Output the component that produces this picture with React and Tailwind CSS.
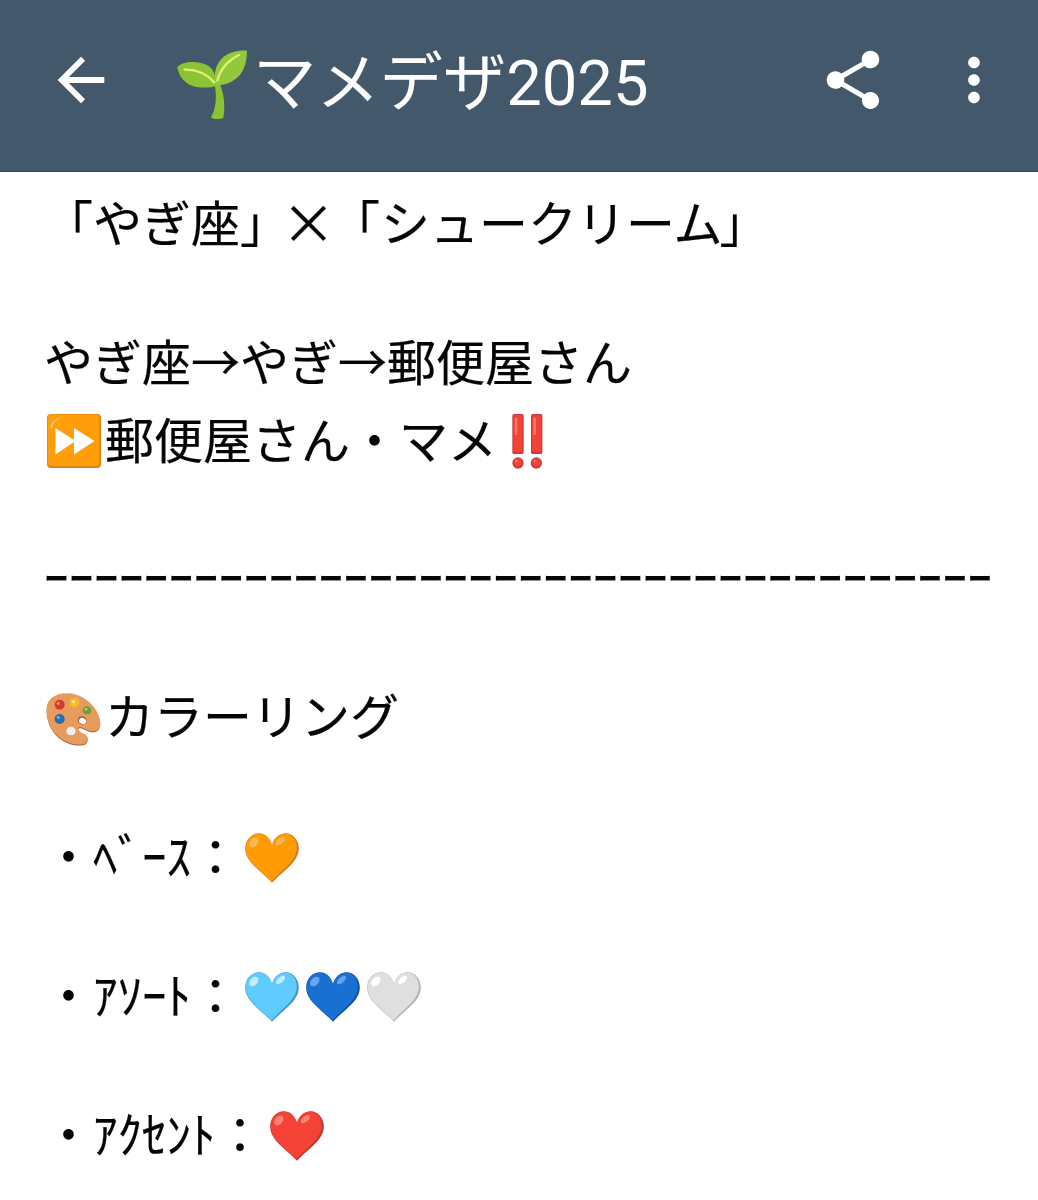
import React from "react";
import { MdArrowBack, MdMoreVert, MdShare } from "react-icons/md";

const Heart = ({ fill, edge, shine, className = "" }) => (
  <span className={`inline-flex w-[61px] h-[60px] shrink-0 items-center ${className}`}>
    <svg viewBox="0 0 54 50" className="ml-[4px] mt-[8px] w-[54px] h-[50px]">
      <path
        d="M27 12.5C25.5 5.500 20.500.3 14 .3 6 .3.2 7 .2 15.500.2 29 15 37 27 49.800 39 37 53.800 29 53.800 15.500 53.800 7 48 .3 40.500.3 34 .3 28.500 5.500 27 12.500Z"
        fill={edge}
      />
      <path
        d="M27 12.5C25.500 5.500 20.500.8 14 .8 6.300.8.7 7 .7 15.300.7 28.500 15 36.500 26.500 48.500 38 35.500 51.800 28 51.800 14.500 51.800 6.500 46.500.8 40.500.8 34 .8 28.500 5.500 27 12.500Z"
        fill={fill}
      />
      <ellipse cx="8.800" cy="9.500" rx="3.700" ry="5.600" transform="rotate(42 8.800 9.500)" fill={shine} />
      <ellipse cx="35.500" cy="8" rx="2.800" ry="5.600" transform="rotate(48 35.500 8)" fill={shine} />
    </svg>
  </span>
);

const Seedling = () => (
  <svg viewBox="440 60 210 207" className="w-[70px] h-[69px]">
    <path
      d="M552 155C557 185 562 225 543 261C541 268 575 269 579 263C584 235 583 195 569 163Z"
      fill="#8bc334"
    />
    <path
      d="M441 112C452 96 484 93 509 98C538 104 552 118 555 145L559 167C538 175 500 175 477 164C457 153 445 134 441 112Z"
      fill="#8bc334"
    />
    <path
      d="M555 160C549 133 556 99 582 79C603 64 627 61 650 62C650 91 643 121 623 141C604 159 580 166 558 166Z"
      fill="#94c83c"
    />
    <path
      d="M463 119C494 118 525 128 552 157M561 151C570 120 593 91 626 75"
      fill="none"
      stroke="#e3ee72"
      strokeWidth="7"
      strokeLinecap="round"
    />
  </svg>
);

const FastForward = () => (
  <span className="inline-flex w-[61px] shrink-0 items-center">
    <svg viewBox="0 0 54 54" className="ml-[3px] mt-[6px] w-[54px] h-[54px]">
      <rect width="54" height="54" rx="4" fill="#db850f" />
      <rect x=".8" y=".5" width="51.500" height="51.500" rx="3.500" fill="#ff9d0a" />
      <path d="M3.500 14C3.500 8 8 4.500 15 3.500C9 6 6 9 5 14Z" fill="#ffc56a" />
      <path d="M8.500 14 27 26V14L47.500 27 27 40.500V28L8.500 40.500Z" fill="#fff" />
    </svg>
  </span>
);

const DoubleBang = () => (
  <span className="inline-flex w-[61px] shrink-0 items-center justify-center">
    <svg viewBox="98 41 91 165" className="mt-[6px] w-[31px] h-[55px]">
      <g fill="#c83a3a">
        <rect x="98" y="41" width="34" height="120" rx="5" />
        <rect x="154" y="41" width="34" height="120" rx="5" />
        <circle cx="115" cy="188" r="17" />
        <circle cx="170" cy="188" r="17" />
      </g>
      <g fill="#f44336">
        <rect x="101" y="44" width="27" height="112" rx="3" />
        <rect x="157" y="44" width="27" height="112" rx="3" />
        <circle cx="115" cy="186" r="13" />
        <circle cx="170" cy="186" r="13" />
      </g>
      <g fill="#ff7769">
        <rect x="105" y="52" width="8" height="52" rx="3" />
        <rect x="161" y="52" width="8" height="52" rx="3" />
        <circle cx="110" cy="182" r="4" />
        <circle cx="165" cy="182" r="4" />
      </g>
    </svg>
  </span>
);

const palettePath =
  "M52 86C52 56 82 37 119 40C164 44 205 80 212 121C216 146 202 158 182 153C169 150 158 139 150 142C140 149 155 157 168 163C179 170 177 188 164 192C139 198 104 188 82 165C61 144 51 114 52 86Z";

const Palette = () => (
  <span className="inline-flex w-[61px] shrink-0 items-center">
    <svg viewBox="50 36 165 162" className="ml-[2px] mt-[9px] w-[55px] h-[54px]">
      <path d={palettePath} fill="#9c6540" transform="translate(0 3)" />
      <path d={palettePath} fill="#e79b5c" />
      <circle cx="91" cy="74" r="15" fill="#cf3b2d" />
      <circle cx="87" cy="70" r="5" fill="#f3887d" />
      <ellipse cx="135" cy="68" rx="15" ry="13" fill="#f7bf25" />
      <circle cx="132" cy="65" r="5" fill="#ffe685" />
      <ellipse cx="173" cy="91" rx="13" ry="12" fill="#6d9e38" />
      <circle cx="170" cy="88" r="4" fill="#b3d579" />
      <circle cx="91" cy="117" r="15" fill="#286ca8" />
      <circle cx="87" cy="112" r="5" fill="#70acdb" />
      <ellipse cx="125" cy="153" rx="14" ry="13" fill="#f1eeee" />
      <ellipse cx="159" cy="121" rx="14" ry="12" fill="#9c6540" transform="rotate(30 159 121)" />
      <ellipse cx="160" cy="123" rx="11" ry="9" fill="#fff" transform="rotate(30 160 123)" />
    </svg>
  </span>
);

const Line = ({ className = "", children }) => (
  <p className={`flex h-[60px] items-center whitespace-pre ${className}`}>{children}</p>
);

const App = () => {
  return (
    <div
      lang="ja"
      className="h-[1200px] w-[1038px] overflow-hidden bg-white text-[#050505] font-['Noto_Sans_CJK_JP',sans-serif]"
    >
      <header className="flex h-[172px] items-start border-b border-[#34424f] bg-[#43586b] pl-[46px] pt-[45px] text-white">
        <button type="button" aria-label="戻る">
          <MdArrowBack className="size-[70px]" />
        </button>
        <h1 className="ml-[61px] mt-[4px] flex h-[70px] items-center text-[63.300px] font-normal leading-[70px] font-['Roboto','Noto_Sans_CJK_JP',sans-serif]">
          <Seedling />
          <span className="-mt-[3px] ml-[6px]">マメデザ2025</span>
        </h1>
        <div className="ml-auto flex gap-[51px] pr-[29px]">
          <button type="button" aria-label="共有">
            <MdShare className="size-[70px]" />
          </button>
          <button type="button" aria-label="メニュー">
            <MdMoreVert className="size-[70px]" />
          </button>
        </div>
      </header>

      <main className="flex flex-col pl-[44px] pt-[19px] text-[49px] leading-[60px] [-webkit-text-stroke:0.200px_#050505]">
        <Line>
          「やぎ座
          <span className="[font-feature-settings:'halt']">」</span>
          <span className="ml-[17px] mr-[20px] text-[54px]">×</span>
          <span className="mr-px [font-feature-settings:'halt']">「</span>
          シュークリーム
          <span className="-ml-[3px]">」</span>
        </Line>
        <Line className="mt-[79px]">やぎ座→やぎ→郵便屋さん</Line>
        <Line className="mt-[18px]">
          <FastForward />
          郵便屋さん・マメ
          <DoubleBang />
        </Line>
        <Line className="mt-[77px] tracking-[0.460px]">{"ｰ".repeat(38)}</Line>
        <Line className="mt-[79px]">
          <Palette />
          カラーリング
        </Line>
        <Line className="mt-[80px]">
          ・ﾍﾞｰｽ：
          <Heart className="ml-px" fill="#ff9b05" edge="#d47d20" shine="#ffb957" />
        </Line>
        <Line className="mt-[79px]">
          ・ｱｿｰﾄ：
          <Heart className="ml-px" fill="#5fcbff" edge="#4596ba" shine="#c3edff" />
          <Heart fill="#1870d2" edge="#1350a0" shine="#6ba5e9" />
          <Heart fill="#dfdfdf" edge="#b5b5b5" shine="#ffffff" />
        </Line>
        <Line className="mt-[79px]">
          ・ｱｸｾﾝﾄ：
          <Heart className="ml-px" fill="#f44336" edge="#b63a33" shine="#ff8276" />
        </Line>
      </main>
    </div>
  );
};

export default App;
